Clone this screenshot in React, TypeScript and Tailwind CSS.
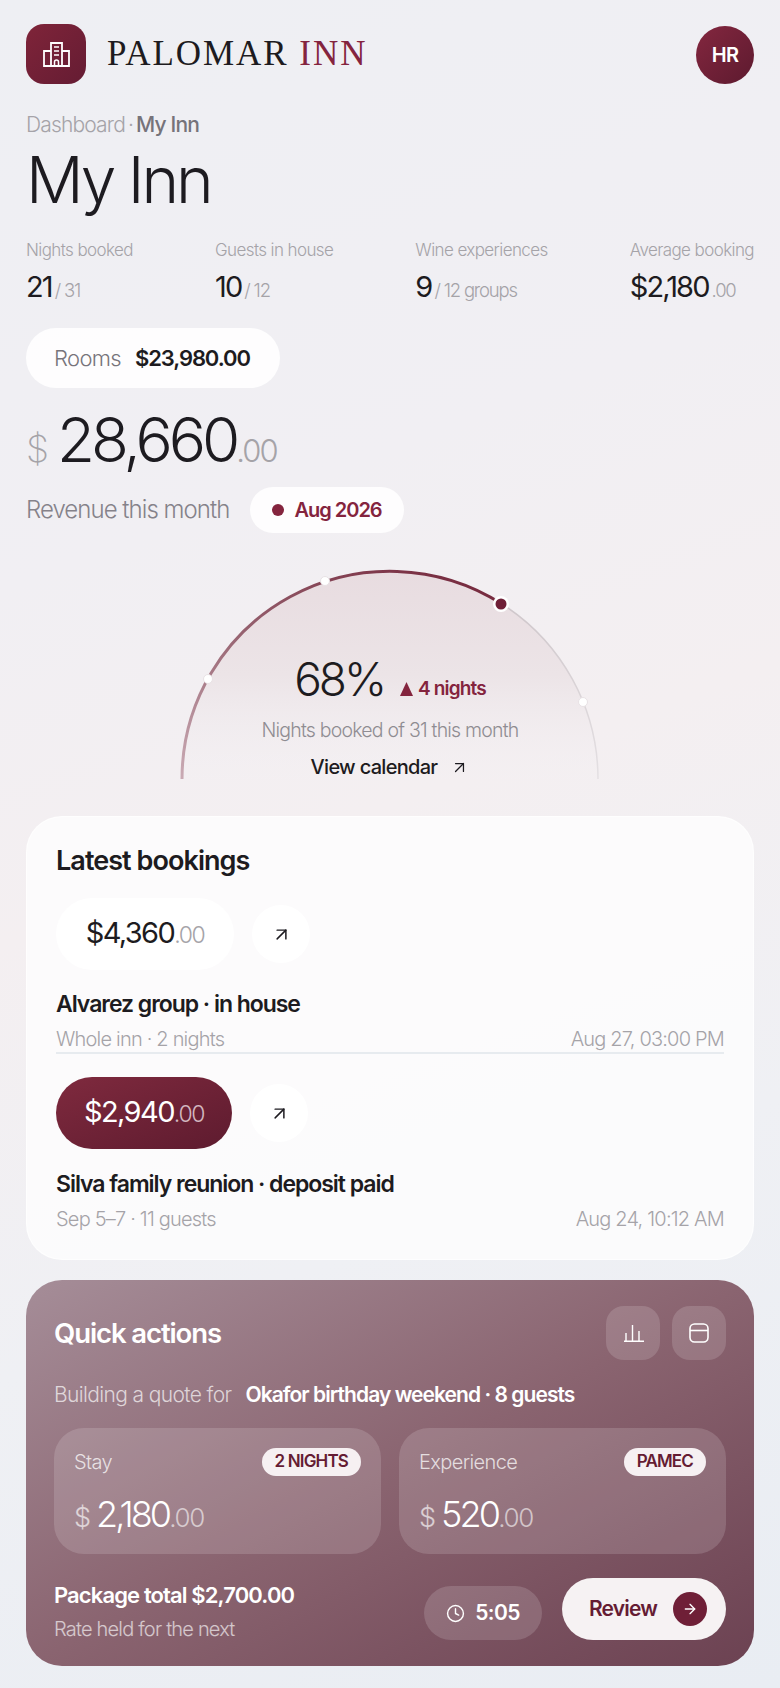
import { ArrowRight, ArrowUpRight, Clock } from "lucide-react";

function Stat({ label, value, suffix }: { label: string; value: string; suffix: string }) {
  return (
    <div className="flex flex-col">
      <span className="text-[17px] leading-[22px] font-light tracking-[-0.035em] text-[#a5a3a8]">{label}</span>
      <span className="mt-[9px] flex items-baseline leading-[34px]">
        <span className="text-[29px] tracking-[-0.065em] font-normal text-[#1d1b20]">{value}</span>
        <span className="ml-[3px] text-[18.5px] font-light tracking-[-0.065em] text-[#a5a3a8]">{suffix}</span>
      </span>
    </div>
  );
}

function Gauge() {
  return (
    <div className="relative mx-auto mt-[34px] h-[214px] w-[440px]">
      <svg className="absolute inset-0" width="440" height="214" viewBox="0 0 440 214" fill="none">
        <defs>
          <linearGradient id="gf" x1="0" y1="0" x2="0" y2="1">
            <stop offset="0" stopColor="#e8dce0" />
            <stop offset="0.5" stopColor="#ece4e7" />
            <stop offset="1" stopColor="#f3f0f3" stopOpacity="0.2" />
          </linearGradient>
          <linearGradient id="gs" x1="0" y1="1" x2="1" y2="0">
            <stop offset="0" stopColor="#c9aab4" />
            <stop offset="0.45" stopColor="#96616f" />
            <stop offset="1" stopColor="#722338" />
          </linearGradient>
          <linearGradient id="gr" x1="0" y1="0" x2="0" y2="1">
            <stop offset="0" stopColor="#cfc7cb" />
            <stop offset="1" stopColor="#e4e0e3" />
          </linearGradient>
        </defs>
        <path d="M12 212 A208 208 0 0 1 428 212 Z" fill="url(#gf)" />
        <path d="M332 37 A208 208 0 0 1 428 212" stroke="url(#gr)" strokeWidth="1.5" />
        <path d="M12 212 A208 208 0 0 1 332 37" stroke="url(#gs)" strokeWidth="3" />
        <circle cx="38" cy="112" r="4.5" fill="#fff" stroke="#e8e2e5" />
        <circle cx="155" cy="14" r="4.5" fill="#fff" stroke="#e8e2e5" />
        <circle cx="413" cy="135" r="4.5" fill="#fff" stroke="#e8e2e5" />
        <circle cx="331" cy="37" r="8" fill="#fff" />
        <circle cx="331" cy="37" r="5.5" fill="#6f1f37" />
      </svg>
      <div className="relative flex flex-col items-center pt-[84px]">
        <div className="flex h-[56px] items-baseline">
          <span className="text-[46px] leading-[56px] font-light tracking-[-0.065em] text-[#1d1b20]">68%</span>
          <span className="ml-[16px] flex items-center text-[19px] leading-[24px] font-semibold tracking-[-0.045em] text-[#84243e]">
            <svg width="13" height="14" viewBox="0 0 13 14" className="mr-[5px]"><path d="M6.5 0 L13 14 L0 14 Z" fill="#84243e" /></svg>
            4 nights
          </span>
        </div>
        <span className="mt-[11px] text-[19.5px] leading-[24px] font-light tracking-[-0.04em] text-[#8f8c92]">Nights booked of 31 this month</span>
        <span className="mt-[13px] flex items-center text-[20px] leading-[24px] font-medium tracking-[-0.035em] text-[#1d1b20]">
          View calendar
          <ArrowUpRight className="ml-[13px]" size={19} strokeWidth={1.6} />
        </span>
      </div>
    </div>
  );
}

function Booking({ amount, dark, title, sub, time, w, titleMt }: { amount: string; dark?: boolean; title: string; sub: string; time: string; w: string; titleMt: string }) {
  return (
    <div className="flex flex-col">
      <div className="flex items-center gap-[18px]">
        <div className={dark
          ? `flex h-[72px] ${w} items-baseline justify-center rounded-[36px] bg-gradient-to-br from-[#7f2a3e] to-[#5e1b2f] pt-[17px]`
          : `flex h-[72px] ${w} items-baseline justify-center rounded-[36px] bg-white pt-[17px]`}>
          <span className={dark ? "text-[29px] leading-[36px] tracking-[-0.055em] text-white" : "text-[29px] leading-[36px] tracking-[-0.055em] text-[#1d1b20]"}>{amount}</span>
          <span className={dark ? "text-[23px] font-light tracking-[-0.06em] text-[#d3b8c0]" : "text-[23px] font-light tracking-[-0.06em] text-[#a5a3a8]"}>.00</span>
        </div>
        <div className="flex h-[58px] w-[58px] items-center justify-center rounded-full bg-white">
          <ArrowUpRight size={21} strokeWidth={1.7} className="text-[#1d1b20]" />
        </div>
      </div>
      <div className={`${titleMt} text-[23px] leading-[28px] font-semibold tracking-[-0.045em] text-[#1d1b20]`}>{title}</div>
      <div className="mt-[9px] flex justify-between text-[20px] leading-[24px] font-light tracking-[-0.04em] text-[#a5a3a8]">
        <span>{sub}</span>
        <span>{time}</span>
      </div>
    </div>
  );
}

function SubCard({ label, badge, amount }: { label: string; badge: string; amount: string }) {
  return (
    <div className="h-[126px] flex-1 rounded-[30px] bg-white/15 px-[20px] pt-[20px]">
      <div className="flex items-center justify-between">
        <span className="text-[20px] leading-[28px] font-light tracking-[-0.03em] text-white/75">{label}</span>
        <span className="flex h-[28px] items-center rounded-[14px] bg-[#f6f0f2] px-[13px] text-[17px] font-semibold tracking-[-0.05em] text-[#651c33]">{badge}</span>
      </div>
      <div className="mt-[16px] flex items-baseline leading-[44px]">
        <span className="mr-[5px] text-[27px] font-light text-white/65">$</span>
        <span className="text-[36px] font-light tracking-[-0.08em] text-white">{amount}</span>
        <span className="text-[26px] font-light tracking-[-0.05em] text-white/60">.00</span>
      </div>
    </div>
  );
}

export default function App() {
  return (
    <div className="flex h-[1688px] w-[780px] flex-col overflow-hidden bg-[linear-gradient(160deg,#eeeff3_0%,#f1eff3_30%,#f4eff1_48%,#eff0f4_70%,#e9edf3_100%)] px-[26px] pt-[24px] font-[Inter,sans-serif]">
      <header className="flex items-center justify-between">
        <div className="flex items-center">
          <div className="flex h-[60px] w-[60px] items-center justify-center rounded-[18px] bg-gradient-to-br from-[#7f2439] to-[#651c33]">
            <svg width="27" height="25" viewBox="0 0 27 25" fill="none" stroke="#fff" strokeWidth="1.8">
              <path d="M1 9h7v15H1zM19 9h7v15h-7zM8 1h11v23H8z" />
              <path d="M11 5h5M11 9h5M11 13h5M11.5 24v-4a2 2 0 0 1 4 0v4" strokeWidth="1.5" />
            </svg>
          </div>
          <div className="ml-[21px] whitespace-nowrap font-['Liberation_Serif',serif] text-[35px] leading-[40px] tracking-[0.056em] text-[#1d1b20]">
            PALOMAR <span className="text-[#84243e]">INN</span>
          </div>
        </div>
        <div className="mt-[2px] flex h-[58px] w-[58px] items-center justify-center rounded-full bg-gradient-to-br from-[#84273f] to-[#5d1a2f] text-[20px] font-semibold tracking-[-0.04em] text-white">HR</div>
      </header>

      <div className="mt-[28px] text-[21px] leading-[26px] font-light tracking-[-0.04em] text-[#a5a3a8]">
        Dashboard<span className="mx-[3px]">·</span><span className="font-medium text-[#76737a]">My Inn</span>
      </div>
      <h1 className="mt-[4px] text-[64px] leading-[76px] font-light tracking-[-0.05em] text-[#1d1b20]">My Inn</h1>

      <div className="mt-[21px] flex justify-between">
        <Stat label="Nights booked" value="21" suffix="/ 31" />
        <Stat label="Guests in house" value="10" suffix="/ 12" />
        <Stat label="Wine experiences" value="9" suffix="/ 12 groups" />
        <Stat label="Average booking" value="$2,180" suffix=".00" />
      </div>

      <div className="mt-[21px] flex h-[60px] w-[254px] items-center rounded-[30px] bg-white/90 pl-[28px]">
        <span className="text-[22px] font-light tracking-[-0.03em] text-[#77747b]">Rooms</span>
        <span className="ml-[14px] text-[22px] font-semibold tracking-[-0.05em] text-[#1d1b20]">$23,980.00</span>
      </div>

      <div className="mt-[16px] flex items-baseline leading-[72px]">
        <span className="text-[37px] font-extralight text-[#a5a3a8]">$</span>
        <span className="ml-[8px] text-[62px] font-light tracking-[-0.065em] text-[#1d1b20]">28,660</span>
        <span className="text-[31px] font-light tracking-[-0.06em] text-[#a5a3a8]">.00</span>
      </div>

      <div className="flex items-center">
        <span className="text-[24px] font-light tracking-[-0.04em] text-[#85828a]">Revenue this month</span>
        <span className="ml-[21px] flex h-[46px] w-[154px] items-center rounded-[23px] bg-white/90 pl-[22px] text-[20px] font-semibold tracking-[-0.05em] text-[#84243e]">
          <span className="mr-[10px] h-[12px] w-[12px] rounded-full bg-[#84243e]" />
          Aug 2026
        </span>
      </div>

      <Gauge />

      <section className="mt-[35px] flex h-[444px] flex-col rounded-[36px] border border-white/70 bg-white/75 px-[29px] pt-[26px]">
        <h2 className="text-[27px] leading-[36px] font-semibold tracking-[-0.035em] text-[#1d1b20]">Latest bookings</h2>
        <div className="mt-[19px] border-b-2 border-[#e7ebef] pb-[1px]">
          <Booking w="w-[178px]" titleMt="mt-[20px]" amount="$4,360" title="Alvarez group · in house" sub="Whole inn · 2 nights" time="Aug 27, 03:00 PM" />
        </div>
        <div className="mt-[23px]">
          <Booking w="w-[176px]" titleMt="mt-[21px]" dark amount="$2,940" title="Silva family reunion · deposit paid" sub="Sep 5–7 · 11 guests" time="Aug 24, 10:12 AM" />
        </div>
      </section>

      <section className="mt-[20px] flex h-[386px] flex-col rounded-[36px] bg-gradient-to-br from-[#a58d98] via-[#8a6470] to-[#6c4252] px-[28px] pt-[26px]">
        <div className="flex items-center justify-between">
          <h2 className="text-[27.5px] leading-[54px] font-semibold tracking-[-0.04em] text-white">Quick actions</h2>
          <div className="flex gap-[12px]">
            <div className="flex h-[54px] w-[54px] items-center justify-center rounded-[18px] bg-white/15">
              <svg width="21" height="18" viewBox="0 0 21 18" fill="none" stroke="#fff" strokeWidth="1.4"><path d="M1 17.3h20M3 17V9M9.5 17V1M16 17V7" /></svg>
            </div>
            <div className="flex h-[54px] w-[54px] items-center justify-center rounded-[18px] bg-white/15">
              <svg width="20" height="20" viewBox="0 0 20 20" fill="none" stroke="#fff" strokeWidth="1.6"><rect x="1" y="1" width="18" height="18" rx="4.5" /><path d="M1 7.5h18" /></svg>
            </div>
          </div>
        </div>
        <div className="mt-[17px] flex items-center leading-[36px]">
          <span className="text-[21px] font-light tracking-[-0.03em] text-white/70">Building a quote for</span>
          <span className="ml-[14px] text-[21px] font-semibold tracking-[-0.045em] text-white">Okafor birthday weekend · 8 guests</span>
        </div>
        <div className="mt-[15px] flex gap-[18px]">
          <SubCard label="Stay" badge="2 NIGHTS" amount="2,180" />
          <SubCard label="Experience" badge="PAMEC" amount="520" />
        </div>
        <div className="mt-[24px] flex items-start justify-between">
          <div className="flex flex-col">
            <span className="mt-[3px] text-[22px] leading-[28px] font-semibold tracking-[-0.04em] text-white">Package total $2,700.00</span>
            <span className="mt-[8px] text-[20px] leading-[24px] font-light tracking-[-0.04em] text-white/65">Rate held for the next</span>
          </div>
          <div className="flex items-end gap-[20px]">
            <div className="flex h-[54px] w-[118px] items-center justify-center rounded-[27px] bg-white/15 text-[21px] font-semibold tracking-[-0.03em] text-white">
              <Clock size={19} strokeWidth={1.8} className="mr-[10px]" />
              5:05
            </div>
            <div className="flex h-[62px] w-[164px] items-center rounded-[31px] bg-[#f6f2f3] pl-[27px] text-[21px] font-semibold tracking-[-0.04em] text-[#651c33]">
              Review
              <span className="ml-[16px] flex h-[34px] w-[34px] items-center justify-center rounded-full bg-[#6f1f37]">
                <ArrowRight size={16} strokeWidth={2} className="text-white" />
              </span>
            </div>
          </div>
        </div>
      </section>
    </div>
  );
}
